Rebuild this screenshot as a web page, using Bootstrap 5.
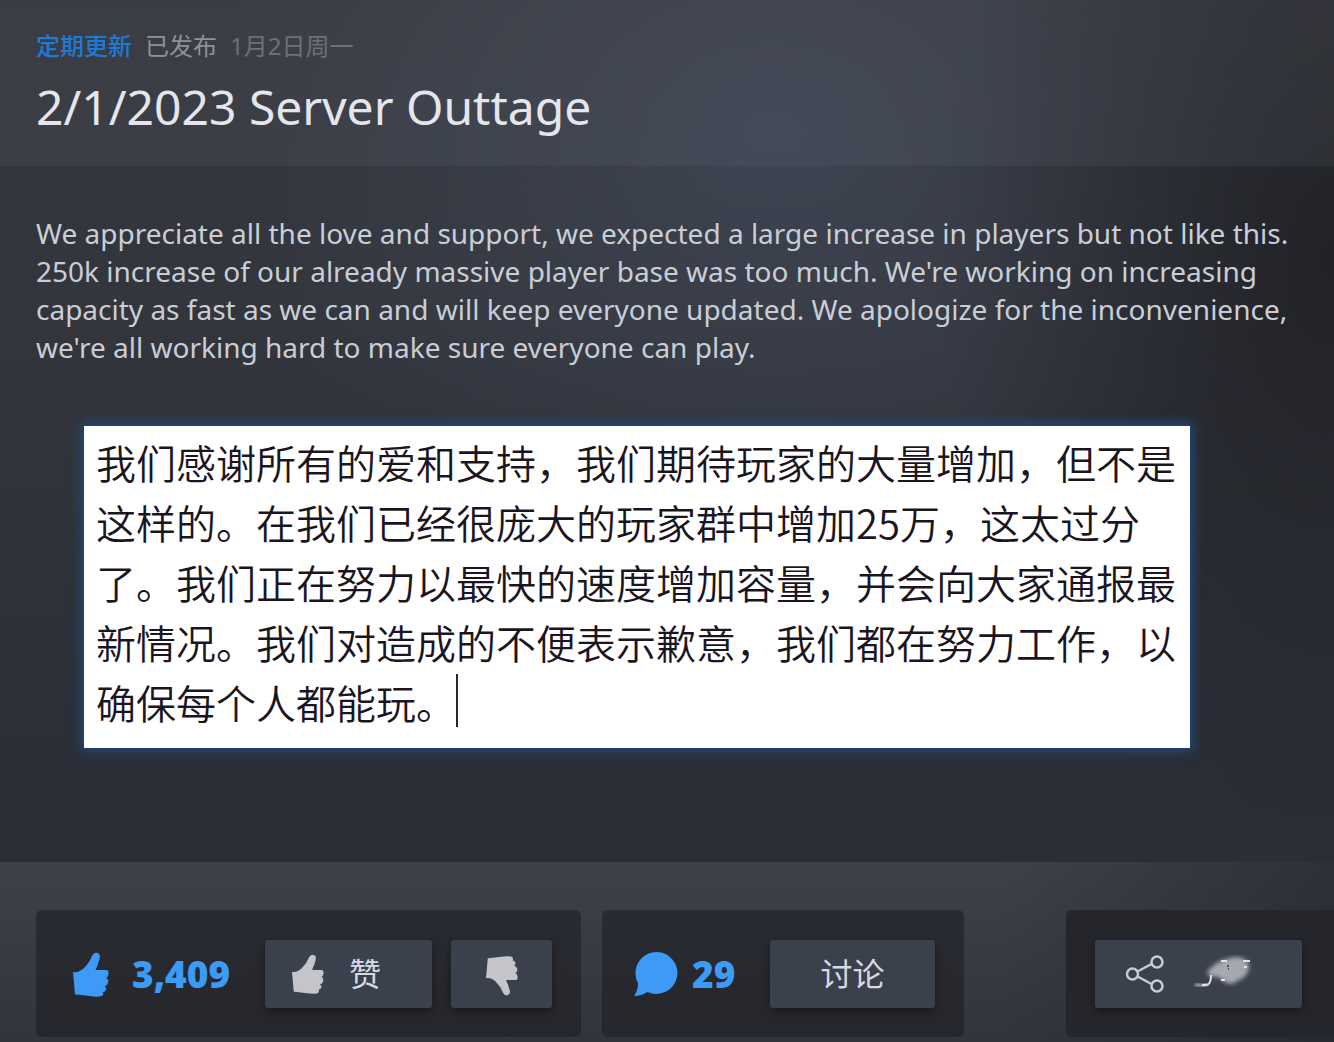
<!DOCTYPE html>
<html lang="zh-CN">
<head>
<meta charset="utf-8">
<meta name="viewport" content="width=device-width, initial-scale=1">
<title>2/1/2023 Server Outtage</title>
<link href="https://cdn.jsdelivr.net/npm/bootstrap@5.3.0/dist/css/bootstrap.min.css" rel="stylesheet">
<style>
  :root {
    --ui-font: "Noto Sans", "Noto Sans CJK SC", sans-serif;
    --accent: #3d9bf5;
  }
  body {
    font-family: var(--ui-font);
    color: #c9ced6;
    background-color: #2d3038;
    background-image:
      radial-gradient(ellipse 400px 600px at 100% 260px, rgba(24, 24, 28, .65), transparent 100%),
      radial-gradient(ellipse 560px 420px at 58% 130px, rgba(72, 82, 104, .5), transparent 100%),
      linear-gradient(180deg, #323439 0, #33363d 300px, #2b2e37 800px);
    overflow-x: hidden;
  }
  .post-head { background: rgba(110, 114, 128, .15); padding: 28px 36px 27px; }
  .post-meta { font-size: 24px; line-height: 36px; gap: 13px; }
  .post-kind { color: #1f7ad6; font-weight: 500; text-decoration: none; }
  .post-state { color: #8f929a; }
  .post-date { color: #6e7079; }
  .post-title { font-size: 48px; line-height: 64px; font-weight: 400; color: #e4e6ec; margin: 11px 0 0; }
  .post-body { padding: 48px 36px 114px; }
  .post-text { font-size: 28px; line-height: 38px; margin: 0 0 60px; }
  .translation { margin: 0 108px 0 48px; box-shadow: 0 0 10px 3px #204a7c; }
  .translation textarea {
    font: 350 40px/60px "Noto Sans CJK SC", sans-serif;
    color: #1b1522; background: #fff; padding: 6px 12px 16px;
    height: 322px; resize: none; overflow: hidden;
  }
  .caret { left: 372px; top: 248px; width: 2px; height: 53px; background: #2a2733; }
  .post-foot {
    padding: 48px 0 5px 36px; gap: 21px;
    background:
      linear-gradient(90deg, transparent 75%, rgba(30, 32, 40, .5) 100%),
      linear-gradient(180deg, #3f4147, #31343d);
  }
  .stat-panel { background: linear-gradient(180deg, #292b32, #25272c); border-radius: 6px; padding: 30px 29px 29px 36px; }
  .stat-panel.talk-panel { padding-left: 32px; }
  .stat-panel.share-panel { padding: 30px 32px 29px 29px; border-radius: 6px 0 0 6px; background: #24262b; }
  .stat-num { font: 800 37px/44px "Open Sans", "Noto Sans", sans-serif; color: var(--accent); }
  .stat-like { width: 133px; margin-left: 22px; }
  .stat-talk { width: 78px; margin-left: 14px; }
  .btn-tool {
    --bs-btn-color: #d5d9e0; --bs-btn-bg: #3b404d; --bs-btn-hover-bg: #4a5060; --bs-btn-hover-color: #fff;
    --bs-btn-border-width: 0; --bs-btn-border-radius: 3px;
    height: 68px; font-size: 32px; line-height: 44px; padding: 0;
    box-shadow: 0 3px 8px rgba(0, 0, 0, .4);
  }
  .w-like { width: 167px; gap: 25px; padding-left: 27px; }
  .w-down { width: 101px; margin-left: 19px; }
  .w-talk { width: 165px; }
  .w-share { width: 207px; gap: 28px; padding-left: 30px; }
</style>
</head>
<body>
<svg class="d-none" xmlns="http://www.w3.org/2000/svg">
  <symbol id="thumb" viewBox="0 0 36 45">
    <path d="M0 20 Q6 21 11 16 Q17 10 19 4 Q21 0 24.500 1 Q28 2 26.500 7 Q25 13 22.500 18 L33 18 Q36 18 35.500 22 Q35.300 25 33 26 Q36 27 35 31 Q34 34 31.500 34 Q34 36 32.500 38.500 Q31.500 40 30 40 Q31 42 29.500 43.500 Q28 45 20 44.500 Q9 43 2 42.500 Z"/>
  </symbol>
</svg>
<main>
  <header class="post-head">
    <div class="post-meta d-flex">
      <a class="post-kind" href="#">定期更新</a>
      <span class="post-state">已发布</span>
      <time class="post-date" datetime="2023-01-02">1月2日周一</time>
    </div>
    <h1 class="post-title">2/1/2023 Server Outtage</h1>
  </header>
  <section class="post-body">
    <p class="post-text">We appreciate all the love and support, we expected a large increase in players but not like this. 250k increase of our already massive player base was too much. We're working on increasing capacity as fast as we can and will keep everyone updated. We apologize for the inconvenience, we're all working hard to make sure everyone can play.</p>
    <div class="translation position-relative">
      <textarea class="d-block w-100 border-0 rounded-0" aria-label="译文" spellcheck="false">我们感谢所有的爱和支持，我们期待玩家的大量增加，但不是这样的。在我们已经很庞大的玩家群中增加25万，这太过分了。我们正在努力以最快的速度增加容量，并会向大家通报最新情况。我们对造成的不便表示歉意，我们都在努力工作，以确保每个人都能玩。</textarea>
      <span class="caret position-absolute"></span>
    </div>
  </section>
  <footer class="post-foot d-flex">
    <div class="stat-panel d-flex align-items-center">
      <svg width="38" height="45" viewBox="0 0 36 45" fill="#3d9bf5" aria-hidden="true"><use href="#thumb"/></svg>
      <span class="stat-num stat-like">3,409</span>
      <button type="button" class="btn btn-tool w-like d-flex align-items-center">
        <svg width="32" height="40" fill="#c3c5ca" aria-hidden="true"><use href="#thumb"/></svg>
        <span>赞</span>
      </button>
      <button type="button" class="btn btn-tool w-down d-flex align-items-center justify-content-center pt-1" aria-label="踩">
        <svg width="32" height="40" viewBox="0 0 36 45" fill="#c3c5ca" aria-hidden="true"><g transform="matrix(1 0 0 -1 0 45)"><use href="#thumb" width="36" height="45"/></g></svg>
      </button>
    </div>
    <div class="stat-panel talk-panel d-flex align-items-center">
      <svg width="44" height="46" viewBox="0 0 44 46" fill="#3d9bf5" aria-hidden="true"><path d="M22.500 1a21 21 0 1 1-9 40Q7 45 0 45Q4 40 4 32A21 21 0 0 1 22.500 1Z"/></svg>
      <span class="stat-num stat-talk">29</span>
      <button type="button" class="btn btn-tool w-talk">讨论</button>
    </div>
    <div class="stat-panel share-panel ms-auto">
      <button type="button" class="btn btn-tool w-share d-flex align-items-center" aria-label="分享">
        <svg width="40" height="40" viewBox="0 0 40 40" fill="none" stroke="#c8ccd4" stroke-width="2.500" aria-hidden="true"><path d="M12.500 17.500 26.500 10M12.500 22.500 26.500 30"/><circle cx="7.500" cy="20" r="5.500"/><circle cx="32" cy="8" r="5.500"/><circle cx="32" cy="32" r="5.500"/></svg>
        <svg width="60" height="38" viewBox="0 0 60 38" fill="none" aria-hidden="true">
          <defs>
            <filter id="soft" x="-30%" y="-30%" width="160%" height="160%"><feGaussianBlur stdDeviation="2"/></filter>
            <filter id="softer" x="-30%" y="-60%" width="160%" height="220%"><feGaussianBlur stdDeviation="1"/></filter>
          </defs>
          <path d="M14 17Q24 4 42 2Q56 2 56 13Q54 23 44 26Q38 32 30 26Q26 20 17 22Z" fill="#a6a8af" filter="url(#soft)"/>
          <path d="M2 29Q10 32 15 29" stroke="#8d929d" stroke-width="4" filter="url(#softer)"/>
          <path d="M9 30H13Q18 30 18 20M28 6H34M50 6H57M28 25H32M51 12H54" stroke="#dfe2e8" stroke-width="2"/>
          <path d="M34 11h2M35 14h1" stroke="#33343a" stroke-width="1.500"/>
        </svg>
      </button>
    </div>
  </footer>
</main>
<script src="https://cdn.jsdelivr.net/npm/bootstrap@5.3.0/dist/js/bootstrap.bundle.min.js"></script>
</body>
</html>
